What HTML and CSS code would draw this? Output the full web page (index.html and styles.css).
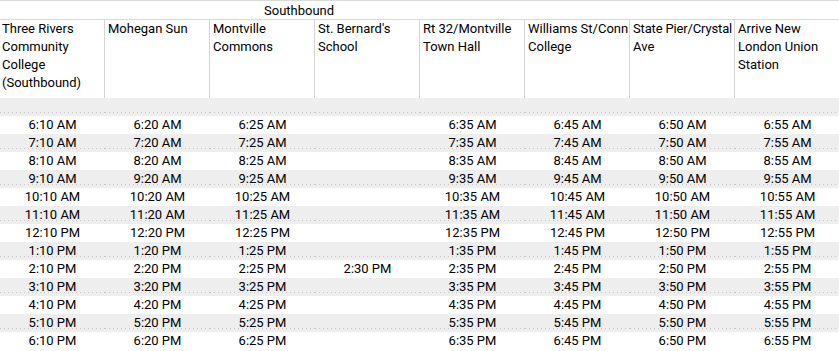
FILE: index.html
```html
<!DOCTYPE html>
<html>
<head>
<meta charset="utf-8">
<link rel="stylesheet" href="styles.css">
</head>
<body>
<table class="sched">
  <colgroup>
    <col class="c"><col class="c"><col class="c"><col class="c"><col class="c"><col class="c"><col class="c"><col class="c last">
  </colgroup>
  <thead>
    <tr class="title"><th colspan="8"><span class="title-text">Southbound</span></th></tr>
    <tr class="heads">
      <th>Three Rivers Community College (Southbound)</th>
      <th>Mohegan Sun</th>
      <th>Montville Commons</th>
      <th>St. Bernard's School</th>
      <th>Rt 32/Montville Town Hall</th>
      <th>Williams St/Conn College</th>
      <th><span class="nw">State Pier/Crystal</span> Ave</th>
      <th class="end">Arrive New London Union Station</th>
    </tr>
  </thead>
  <tbody>
    <tr class="alt"><td></td><td></td><td></td><td></td><td></td><td></td><td></td><td></td></tr>
    <tr><td>6:10 AM</td><td>6:20 AM</td><td>6:25 AM</td><td></td><td>6:35 AM</td><td>6:45 AM</td><td>6:50 AM</td><td>6:55 AM</td></tr>
    <tr class="alt"><td>7:10 AM</td><td>7:20 AM</td><td>7:25 AM</td><td></td><td>7:35 AM</td><td>7:45 AM</td><td>7:50 AM</td><td>7:55 AM</td></tr>
    <tr><td>8:10 AM</td><td>8:20 AM</td><td>8:25 AM</td><td></td><td>8:35 AM</td><td>8:45 AM</td><td>8:50 AM</td><td>8:55 AM</td></tr>
    <tr class="alt"><td>9:10 AM</td><td>9:20 AM</td><td>9:25 AM</td><td></td><td>9:35 AM</td><td>9:45 AM</td><td>9:50 AM</td><td>9:55 AM</td></tr>
    <tr><td>10:10 AM</td><td>10:20 AM</td><td>10:25 AM</td><td></td><td>10:35 AM</td><td>10:45 AM</td><td>10:50 AM</td><td>10:55 AM</td></tr>
    <tr class="alt"><td>11:10 AM</td><td>11:20 AM</td><td>11:25 AM</td><td></td><td>11:35 AM</td><td>11:45 AM</td><td>11:50 AM</td><td>11:55 AM</td></tr>
    <tr><td>12:10 PM</td><td>12:20 PM</td><td>12:25 PM</td><td></td><td>12:35 PM</td><td>12:45 PM</td><td>12:50 PM</td><td>12:55 PM</td></tr>
    <tr class="alt"><td>1:10 PM</td><td>1:20 PM</td><td>1:25 PM</td><td></td><td>1:35 PM</td><td>1:45 PM</td><td>1:50 PM</td><td>1:55 PM</td></tr>
    <tr><td>2:10 PM</td><td>2:20 PM</td><td>2:25 PM</td><td>2:30 PM</td><td>2:35 PM</td><td>2:45 PM</td><td>2:50 PM</td><td>2:55 PM</td></tr>
    <tr class="alt"><td>3:10 PM</td><td>3:20 PM</td><td>3:25 PM</td><td></td><td>3:35 PM</td><td>3:45 PM</td><td>3:50 PM</td><td>3:55 PM</td></tr>
    <tr><td>4:10 PM</td><td>4:20 PM</td><td>4:25 PM</td><td></td><td>4:35 PM</td><td>4:45 PM</td><td>4:50 PM</td><td>4:55 PM</td></tr>
    <tr class="alt"><td>5:10 PM</td><td>5:20 PM</td><td>5:25 PM</td><td></td><td>5:35 PM</td><td>5:45 PM</td><td>5:50 PM</td><td>5:55 PM</td></tr>
    <tr><td>6:10 PM</td><td>6:20 PM</td><td>6:25 PM</td><td></td><td>6:35 PM</td><td>6:45 PM</td><td>6:50 PM</td><td>6:55 PM</td></tr>
  </tbody>
</table>
</body>
</html>
```

FILE: styles.css
```css
html, body {
  margin: 0;
  padding: 0;
  background: #ffffff;
}

.sched {
  border-collapse: separate;
  border-spacing: 0;
  table-layout: fixed;
  width: 840px;
  font-family: Roboto, "Liberation Sans", sans-serif;
  font-size: 13px;
  line-height: 18px;
  color: #000000;
}

.c {
  width: 105px;
}

.sched th,
.sched td {
  padding: 0;
  margin: 0;
  font-weight: normal;
  overflow: hidden;
  white-space: nowrap;
}

.title th {
  height: 17px;
  border-top: 1px solid #dadada;
  border-bottom: 1px solid #dadada;
  text-align: left;
  padding-left: 264px;
}

.title-text {
  position: relative;
  top: 1px;
}

.heads th {
  height: 78px;
  vertical-align: top;
  text-align: left;
  white-space: normal;
  padding: 0 0 0 3px;
  border-right: 1px solid #d4d4d4;
}

.heads th .nw {
  white-space: nowrap;
  letter-spacing: -0.15px;
}

.heads th:first-child {
  padding-left: 2px;
}

.heads th.end {
  border-right: none;
}

.sched td {
  height: 18px;
  text-align: center;
  vertical-align: top;
}

.sched tbody tr.alt td {
  background-color: #eeeeee;
  background-image: repeating-linear-gradient(to right, #c6c6c6 0, #c6c6c6 1px, transparent 1px, transparent 4px);
  background-size: 100% 1px;
  background-position: 0 calc(100% - 3px);
  background-repeat: no-repeat;
}
```
